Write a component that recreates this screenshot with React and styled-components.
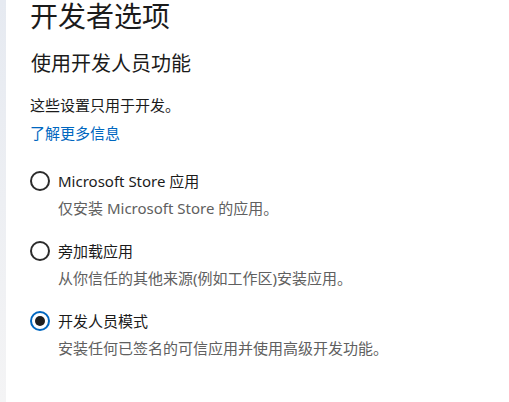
import React from "react";
import styled, { createGlobalStyle } from "styled-components";

const Global = createGlobalStyle`
  html, body { margin: 0; padding: 0; background: #ffffff; }
  body { font-family: "Segoe UI", "Noto Sans CJK SC", "Noto Sans", sans-serif; color: #1a1a1a; }
  * { box-sizing: border-box; }
`;

const Page = styled.div`
  display: flex;
  width: 509px;
  height: 402px;
  overflow: hidden;
`;

const Strip = styled.div`
  width: 6px;
  flex: none;
  background: linear-gradient(#e6eaf1, #f4f4f5);
`;

const Content = styled.main`
  flex: 1;
  padding: 0 0 0 24px;
  display: flex;
  flex-direction: column;
  align-items: flex-start;
`;

const Title = styled.h1`
  margin: 0;
  font-family: "Noto Sans CJK SC", sans-serif;
  font-weight: 400;
  font-size: 28px;
  line-height: 30px;
  color: #1b1b1b;
`;

const Subtitle = styled.h2`
  margin: 19px 0 0 1px;
  font-family: "Noto Sans CJK SC", sans-serif;
  font-weight: 400;
  font-size: 20px;
  line-height: 28px;
  color: #1b1b1b;
`;

const Text = styled.p`
  margin: 17px 0 0 0;
  font-family: "Noto Sans CJK SC", sans-serif;
  font-size: 15px;
  line-height: 22px;
  color: #1b1b1b;
`;

const Link = styled.a`
  margin-top: 6px;
  font-family: "Noto Sans CJK SC", sans-serif;
  font-size: 15px;
  line-height: 22px;
  color: #0067c0;
  text-decoration: none;
`;

const Options = styled.div`
  margin-top: 26px;
  display: flex;
  flex-direction: column;
  gap: 21px;
`;

const Option = styled.label`
  display: grid;
  grid-template-columns: 20px 1fr;
  column-gap: 8px;
  row-gap: 5px;
  align-items: center;
`;

const Radio = styled.span`
  width: 20px;
  height: 20px;
  border-radius: 50%;
  border: 2px solid ${(p) => (p.checked ? "#0067c0" : "#2b2b2b")};
  display: flex;
  align-items: center;
  justify-content: center;
  &::after {
    content: "";
    display: ${(p) => (p.checked ? "block" : "none")};
    width: 10px;
    height: 10px;
    border-radius: 50%;
    background: #1f1f1f;
  }
`;

const Label = styled.span`
  font-family: "Segoe UI", "Noto Sans", "Noto Sans CJK SC", sans-serif;
  font-size: 15px;
  line-height: 22px;
  color: #1b1b1b;
`;

const Desc = styled.span`
  grid-column: 2;
  font-family: "Segoe UI", "Noto Sans", "Noto Sans CJK SC", sans-serif;
  font-size: 15px;
  line-height: 22px;
  color: #606060;
`;

const options = [
  { label: "Microsoft Store 应用", desc: "仅安装 Microsoft Store 的应用。", checked: false },
  { label: "旁加载应用", desc: "从你信任的其他来源(例如工作区)安装应用。", checked: false },
  { label: "开发人员模式", desc: "安装任何已签名的可信应用并使用高级开发功能。", checked: true },
];

export default function App() {
  return (
    <>
      <Global />
      <Page>
        <Strip />
        <Content>
          <Title>开发者选项</Title>
          <Subtitle>使用开发人员功能</Subtitle>
          <Text>这些设置只用于开发。</Text>
          <Link href="#">了解更多信息</Link>
          <Options>
            {options.map((o) => (
              <Option key={o.label}>
                <Radio checked={o.checked} />
                <Label>{o.label}</Label>
                <Desc>{o.desc}</Desc>
              </Option>
            ))}
          </Options>
        </Content>
      </Page>
    </>
  );
}
